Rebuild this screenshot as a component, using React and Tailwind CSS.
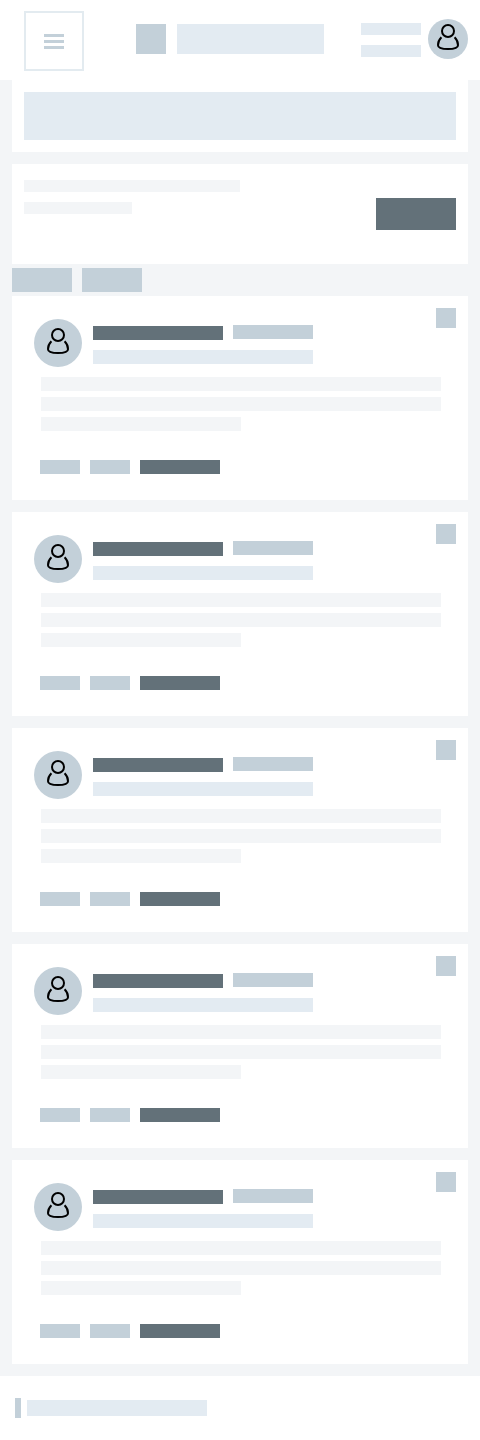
function PersonIcon({ className }) {
  return (
    <svg
      className={className}
      width="24"
      height="28"
      viewBox="0 0 24 28"
      fill="none"
      stroke="#000"
      strokeWidth="2"
      strokeLinecap="butt"
    >
      <circle cx="12" cy="8" r="6" />
      <path d="M5.4 14.3C3.2 16.5 2 19.6 2 22.2C2 24.9 6.6 26 12 26C17.4 26 22 24.9 22 22.2C22 19.6 20.8 16.5 18.6 14.3" />
    </svg>
  );
}

function Header() {
  return (
    <header className="flex h-20 items-start bg-white pl-6">
      <div className="mt-[11px] flex size-[60px] flex-col items-center gap-[3px] border-2 border-[#e3ebf0] pt-[21px]">
        <div className="h-[3px] w-5 bg-[#c3d0d9]" />
        <div className="h-[3px] w-5 bg-[#c3d0d9]" />
        <div className="h-[3px] w-5 bg-[#c3d0d9]" />
      </div>
      <div className="mt-6 ml-[52px] size-[30px] bg-[#c3d0d9]" />
      <div className="mt-6 ml-[11px] h-[30px] w-[147px] bg-[#e3ebf2]" />
      <div className="mt-[23px] ml-[37px] flex flex-col gap-2.5">
        <div className="h-3 w-[60px] bg-[#e3ebf2]" />
        <div className="h-3 w-[60px] bg-[#e3ebf2]" />
      </div>
      <div className="mt-[19px] ml-[7px] flex size-10 justify-center rounded-full bg-[#c3d0d9] pt-1">
        <PersonIcon />
      </div>
    </header>
  );
}

function Post() {
  return (
    <article className="h-[204px] bg-white pt-3 pr-3">
      <div className="flex h-[69px] items-start">
        <div className="mt-[11px] ml-[22px] flex size-12 justify-center rounded-full bg-[#c3d0d9] pt-2">
          <PersonIcon />
        </div>
        <div className="mt-[17px] ml-[11px]">
          <div className="flex gap-2.5">
            <div className="mt-px h-3.5 w-[130px] bg-[#637179]" />
            <div className="h-3.5 w-20 bg-[#c3d0d9]" />
          </div>
          <div className="mt-2.5 h-3.5 w-[220px] bg-[#e3ebf2]" />
        </div>
        <div className="ml-auto size-5 bg-[#c3d0d9]" />
      </div>
      <div className="ml-[29px] flex flex-col gap-1.5">
        <div className="h-3.5 w-[400px] bg-[#f3f5f7]" />
        <div className="h-3.5 w-[400px] bg-[#f3f5f7]" />
        <div className="h-3.5 w-[200px] bg-[#f3f5f7]" />
      </div>
      <div className="mt-[29px] ml-7 flex gap-2.5">
        <div className="h-3.5 w-10 bg-[#c3d0d9]" />
        <div className="h-3.5 w-10 bg-[#c3d0d9]" />
        <div className="h-3.5 w-20 bg-[#637179]" />
      </div>
    </article>
  );
}

export default function App() {
  return (
    <div className="h-[1440px] w-[480px] bg-[#f3f5f7]">
      <Header />
      <main className="h-[1296px] px-3">
        <section className="bg-white p-3">
          <div className="h-12 bg-[#e3ebf2]" />
        </section>
        <section className="mt-3 flex h-[100px] items-start justify-between bg-white px-3 pt-4">
          <div className="flex flex-col gap-2.5">
            <div className="h-3 w-[216px] bg-[#f3f5f7]" />
            <div className="h-3 w-[108px] bg-[#f3f5f7]" />
          </div>
          <div className="mt-[18px] h-8 w-20 bg-[#637179]" />
        </section>
        <nav className="flex gap-2.5 py-1">
          <div className="h-6 w-[60px] bg-[#c3d0d9]" />
          <div className="h-6 w-[60px] bg-[#c3d0d9]" />
        </nav>
        <div className="flex flex-col gap-3">
          {[0, 1, 2, 3, 4].map((id) => (
            <Post key={id} />
          ))}
        </div>
      </main>
      <footer className="flex h-16 items-start gap-1.5 bg-white pt-[22px] pl-[15px]">
        <div className="h-5 w-1.5 bg-[#c3d0d9]" />
        <div className="mt-0.5 h-4 w-[180px] bg-[#e3ebf2]" />
      </footer>
    </div>
  );
}
